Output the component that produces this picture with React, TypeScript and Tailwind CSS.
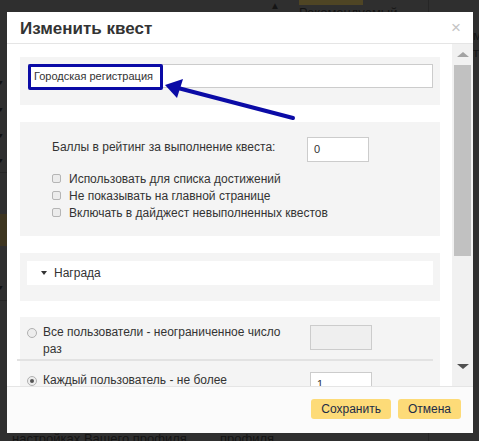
import React from "react";

const FONT = { fontFamily: '"Liberation Sans", Arial, sans-serif' };

function Check() {
  return <span className="inline-block w-[9px] h-[9px] rounded-[2px] border border-[#b5b5b5] bg-[#ececec] shrink-0" />;
}

function Radio({ on }: { on?: boolean }) {
  return (
    <span className="w-[10px] h-[10px] rounded-full border border-[#b0b0b0] bg-[#ededed] shrink-0 flex items-center justify-center">
      {on && <span className="w-[4px] h-[4px] rounded-full bg-[#555]" />}
    </span>
  );
}

export default function App() {
  return (
    <div className="relative w-[479px] h-[441px] overflow-hidden bg-[#2f2f2f]" style={FONT}>
      {/* page behind overlay */}
      <div className="absolute left-[299px] top-0 w-[64px] h-[5px] bg-[#4f4524]" />
      <div className="absolute left-[270px] top-[-2px] text-[#151515] text-[10px]">▲</div>
      <div className="absolute left-[299px] top-[3px] text-[13px] text-[#141414]">Рекомендуемый</div>
      <div className="absolute left-[428px] top-0 w-px h-[12px] bg-[#262626]" />
      <div className="absolute left-[473px] top-[27px] text-[13px] text-[#141414] leading-[17px]">
        м<br />т
      </div>
      <div className="absolute left-0 top-[214px] w-[7px] h-[32px] bg-[#3d3520]" />
      <div className="absolute left-0 top-[172px] w-[7px] h-px bg-[#262626]" />
      <div className="absolute left-0 top-[300px] w-[7px] h-px bg-[#262626]" />
      {[78, 105, 131, 156, 283].map((y) => (
        <div key={y} className="absolute left-[-3px] text-[7px] text-[#111]" style={{ top: y }}>
          ▼
        </div>
      ))}
      <div className="absolute left-[12px] top-[429px] text-[13px] text-[#141414]">настройках Вашего профиля</div>
      <div className="absolute left-[220px] top-[429px] text-[13px] text-[#141414]">профиля</div>
      <div className="absolute left-[428px] top-[433px] w-px h-[8px] bg-[#262626]" />

      {/* modal */}
      <div className="absolute left-[7px] top-[12px] w-[466px] h-[421px] bg-white flex flex-col text-[#333]">
        <div className="h-[32px] shrink-0 flex items-center justify-between pl-[13px] pr-[12px] border-b border-[#e5e5e5]">
          <span className="text-[17px] font-bold text-[#333] pt-[2px]">Изменить квест</span>
          <span className="text-[17px] text-[#c4c4c4] leading-none">×</span>
        </div>

        <div className="relative h-[342px] shrink-0 flex overflow-hidden">
          <div className="flex-1 pl-[13px] pr-[12px] pt-[13px] flex flex-col">
            <div className="relative bg-[#f4f4f4] h-[48px] px-[8px] pt-[7px] pr-[7px] shrink-0">
              <div className="h-[24px] bg-white border border-[#cccccc] flex items-center px-[5px] text-[11px] text-[#333]">
                Городская регистрация
              </div>
              <div className="absolute left-[8px] top-[7px] w-[135px] h-[26px] border-[3px] border-[#0b0ba6] rounded-[2px]" />
            </div>

            <div className="bg-[#f4f4f4] mt-[17px] h-[114px] pt-[15px] pl-[32px] shrink-0 text-[12px] text-[#333]">
              <div className="flex items-start">
                <span className="w-[255px] pt-[1px]">Баллы в рейтинг за выполнение квеста:</span>
                <div className="w-[62px] h-[25px] bg-white border border-[#cccccc] flex items-center px-[6px] text-[11px]">0</div>
              </div>
              <div className="mt-[8px] flex flex-col">
                {["Использовать для списка достижений", "Не показывать на главной странице", "Включать в дайджест невыполненных квестов"].map((t) => (
                  <label key={t} className="h-[17px] flex items-center gap-[8px]">
                    <Check />
                    <span>{t}</span>
                  </label>
                ))}
              </div>
            </div>

            <div className="bg-[#f4f4f4] mt-[17px] h-[48px] pt-[8px] pl-[7px] pr-[7px] shrink-0">
              <div className="h-[24px] bg-white flex items-center pl-[14px] gap-[7px] text-[12px] text-[#333]">
                <span className="w-0 h-0 border-l-[3px] border-r-[3px] border-t-[4px] border-l-transparent border-r-transparent border-t-[#333]" />
                Награда
              </div>
            </div>

            <div className="bg-[#f4f4f4] mt-[16px] shrink-0 pt-[7px] pl-[7px] text-[12px] text-[#333]">
              <div className="flex items-start">
                <div className="w-[283px] flex items-start gap-[6px]">
                  <span className="mt-[4px]"><Radio /></span>
                  <span className="leading-[17px]">
                    Все пользователи - неограниченное число
                    <br />
                    раз
                  </span>
                </div>
                <div className="mt-[1px] w-[62px] h-[25px] bg-[#efefef] border border-[#cccccc]" />
              </div>
              <div className="ml-[-10px] mr-[7px] mt-[1px] h-[2px] bg-[#e2e2e2]" />
              <div className="flex items-start mt-[11px]">
                <div className="w-[283px] flex items-start gap-[6px]">
                  <span className="mt-[4px]"><Radio on /></span>
                  <span className="leading-[17px]">Каждый пользователь - не более</span>
                </div>
                <div className="w-[62px] h-[25px] bg-white border border-[#cccccc] flex items-center px-[6px] text-[11px]">1</div>
              </div>
              <div className="h-[40px]" />
            </div>
          </div>

          {/* scrollbar */}
          <div className="w-[21px] shrink-0 bg-[#f1f1f1] flex flex-col items-center">
            <div className="h-[21px] flex items-center justify-center">
              <span className="w-0 h-0 border-l-[6px] border-r-[6px] border-b-[5px] border-l-transparent border-r-transparent border-b-[#a3a3a3]" />
            </div>
            <div className="w-[17px] h-[191px] bg-[#c1c1c1]" />
            <div className="flex-1" />
            <div className="h-[28px] flex items-start justify-center pt-[6px]">
              <span className="w-0 h-0 border-l-[6px] border-r-[6px] border-t-[5px] border-l-transparent border-r-transparent border-t-[#505050]" />
            </div>
          </div>
        </div>

        <div className="flex-1 border-t border-[#e5e5e5] bg-[#fbfbfb] flex items-start justify-end gap-[7px] pt-[12px] pr-[12px]">
          <button className="h-[20px] px-[10px] rounded-[3px] bg-[#fddb78] text-[12px] text-[#1c2b47]">Сохранить</button>
          <button className="h-[20px] px-[10px] rounded-[3px] bg-[#fddb78] text-[12px] text-[#1c2b47]">Отмена</button>
        </div>
      </div>

      {/* annotation arrow */}
      <svg className="absolute left-0 top-0" width="479" height="441" viewBox="0 0 479 441">
        <line x1="293" y1="118" x2="178" y2="88" stroke="#0b0ba6" strokeWidth="4" strokeLinecap="round" />
        <polygon points="165,85 183,79 177,98" fill="#0b0ba6" />
      </svg>
    </div>
  );
}
